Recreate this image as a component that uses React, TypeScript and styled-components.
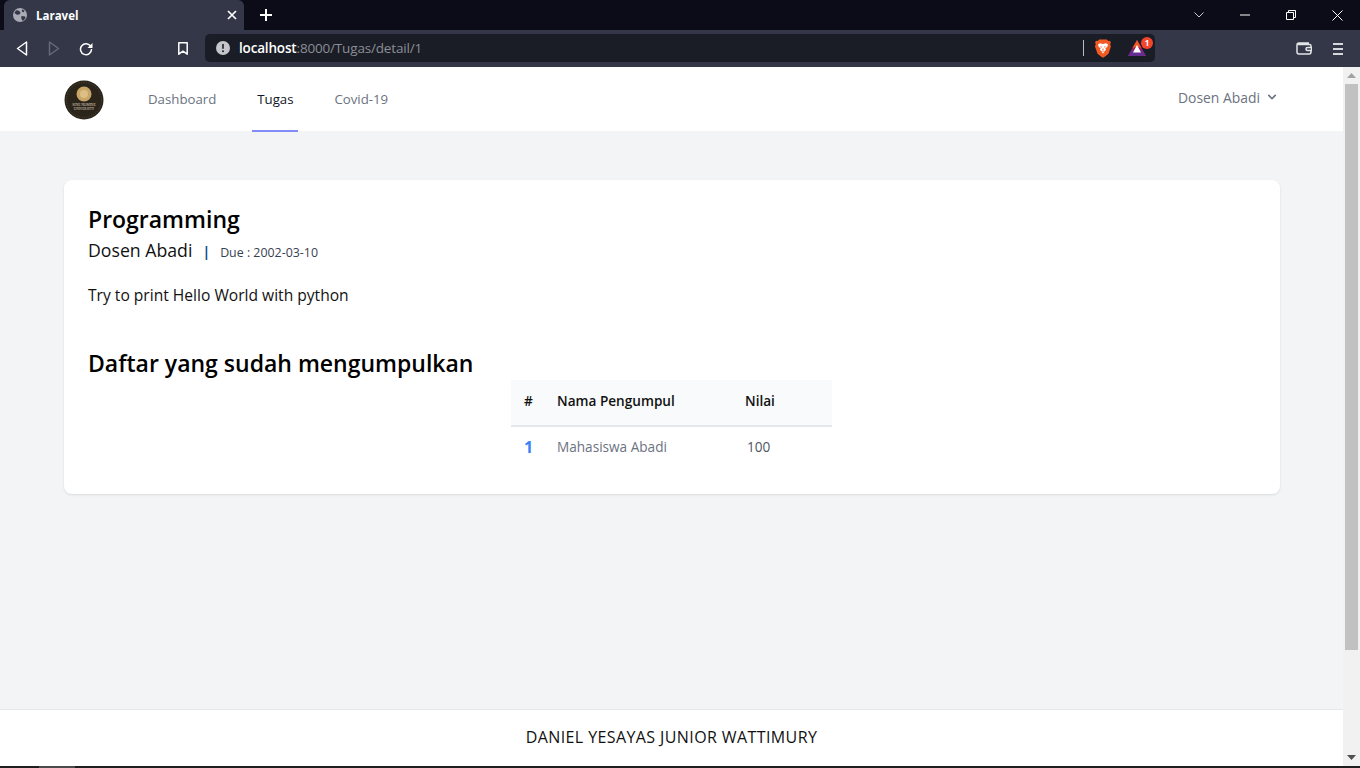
import React from 'react'
import styled, { createGlobalStyle } from 'styled-components'

const GlobalStyle = createGlobalStyle`
  html, body {
    margin: 0;
    padding: 0;
    height: 100%;
    overflow: hidden;
    background: #fff;
  }
  * { box-sizing: border-box; }
`

const PAGE_FONT = `'Open Sans', 'Noto Sans', sans-serif`
const CHROME_FONT = `'Open Sans', 'Noto Sans', sans-serif`

const Screen = styled.div`
  width: 1360px;
  height: 768px;
  display: flex;
  flex-direction: column;
  overflow: hidden;
`

/* browser chrome */
const TabStrip = styled.div`
  height: 30px;
  flex: none;
  display: flex;
  align-items: stretch;
  padding-left: 4px;
  background: #0b0c17;
`
const Tab = styled.div`
  width: 240px;
  display: flex;
  align-items: center;
  padding: 0 5px 0 9px;
  background: #333747;
  border-radius: 6px 6px 0 0;
  font: 700 11.5px ${CHROME_FONT};
  color: #fff;
`
const TabTitle = styled.span`
  flex: 1;
  margin-left: 9px;
`
const TabClose = styled.svg`
  margin-right: 2px;
`
const NewTab = styled.div`
  width: 30px;
  margin-left: 7px;
  display: flex;
  align-items: center;
  justify-content: center;
`
const StripSpacer = styled.div`
  flex: 1;
`
const WindowButton = styled.div`
  width: 46px;
  display: flex;
  align-items: center;
  justify-content: center;
`
const Toolbar = styled.div`
  height: 37px;
  flex: none;
  display: flex;
  align-items: center;
  padding: 0 6px;
  background: #333747;
`
const ToolButton = styled.div<{ $gap?: number; $color?: string }>`
  width: 32px;
  height: 32px;
  flex: none;
  margin-left: ${p => p.$gap || 0}px;
  display: flex;
  align-items: center;
  justify-content: center;
  color: ${p => p.$color || '#fff'};
`
const AddressBar = styled.div`
  width: 950px;
  height: 28px;
  flex: none;
  margin-top: -1px;
  margin-left: 6px;
  padding: 0 8px 0 11px;
  display: flex;
  align-items: center;
  background: #1a1d25;
  border-radius: 5px;
`
const Url = styled.div`
  flex: 1;
  margin-left: 9px;
  padding-bottom: 1px;
  font: 400 13.5px ${CHROME_FONT};
  color: #8b8e96;
  letter-spacing: -0.17px;
`
const UrlHost = styled.span`
  color: #fff;
  font-weight: 600;
`
const AddressDivider = styled.div`
  width: 1px;
  height: 16px;
  background: #b9bbc0;
  margin-right: 11px;
`
const BatWrap = styled.div`
  position: relative;
  width: 18px;
  height: 16px;
  margin-left: 17px;
  margin-right: 1px;
`
const BatBadge = styled.span`
  position: absolute;
  top: -3px;
  left: 13px;
  width: 12px;
  height: 12px;
  border-radius: 50%;
  background: #f1452d;
  color: #fff;
  font: 700 8px/12px ${CHROME_FONT};
  text-align: center;
`

/* viewport */
const Viewport = styled.div`
  flex: 1;
  min-height: 0;
  display: flex;
`
const Page = styled.div`
  flex: 1;
  display: flex;
  flex-direction: column;
  background: #f3f4f6;
  font-family: ${PAGE_FONT};
`
const Scrollbar = styled.div`
  width: 17px;
  flex: none;
  display: flex;
  flex-direction: column;
  align-items: center;
  background: #f1f1f1;
`
const ScrollArrow = styled.div`
  width: 17px;
  height: 17px;
  flex: none;
  display: flex;
  align-items: center;
  justify-content: center;
`
const ScrollThumb = styled.div`
  width: 13px;
  height: 566px;
  flex: none;
  margin-bottom: auto;
  background: #c1c1c1;
`
const Taskbar = styled.div`
  height: 2px;
  flex: none;
  padding-left: 39px;
  background: #1f1f1f;
`
const TaskbarItem = styled.div`
  width: 36px;
  height: 2px;
  background: #4b4b4b;
`

/* app nav */
const Nav = styled.nav`
  height: 65px;
  flex: none;
  display: flex;
  align-items: stretch;
  padding: 0 63px 0 64px;
  background: #fff;
  border-bottom: 1px solid #f3f4f6;
`
const LogoBox = styled.div`
  width: 40px;
  display: flex;
  align-items: center;
  padding-top: 1px;
  margin-right: 40px;
`
const NavLinks = styled.div`
  display: flex;
  gap: 32px;
`
const NavLink = styled.a<{ $active?: boolean }>`
  height: 65px;
  min-width: 46px;
  padding: 1px 4px 0;
  display: flex;
  align-items: center;
  justify-content: center;
  font-size: 13.25px;
  font-weight: 400;
  color: ${p => (p.$active ? '#111827' : '#6b7280')};
  border-bottom: 2px solid ${p => (p.$active ? '#818cf8' : 'transparent')};
`
const UserMenu = styled.div`
  margin-left: auto;
  display: flex;
  align-items: center;
  gap: 4px;
  padding-bottom: 4px;
  font-size: 13.9px;
  color: #6b7280;
`

/* content */
const Main = styled.main`
  flex: 1;
  padding: 48px 63px 0 64px;
`
const Card = styled.section`
  height: 314px;
  padding: 24px 25px 24px 24px;
  background: #fff;
  border-radius: 8px;
  box-shadow: 0 1px 3px rgba(0, 0, 0, 0.07), 0 1px 2px rgba(0, 0, 0, 0.04);
  color: #000;
`
const Title = styled.h1`
  margin: 0;
  padding-bottom: 1px;
  font-size: 23px;
  line-height: 31px;
  font-weight: 600;
`
const MetaRow = styled.div`
  height: 28px;
  display: flex;
  align-items: baseline;
`
const Author = styled.span`
  font-size: 17.7px;
  line-height: 28px;
  color: #111;
`
const Pipe = styled.span`
  margin: 0 10px 0 10px;
  font-size: 14px;
  font-weight: 700;
  color: #0f4c8a;
`
const Due = styled.span`
  font-size: 12.4px;
  color: #374151;
`
const Description = styled.p`
  margin: 20px 0 0;
  padding-bottom: 1px;
  font-size: 15.6px;
  line-height: 23px;
  color: #111;
`
const SectionTitle = styled.h2`
  margin: 40px 0 0;
  padding-bottom: 1px;
  font-size: 23px;
  line-height: 31px;
  font-weight: 600;
`
const Table = styled.table`
  width: 321px;
  margin: 0 auto;
  border-collapse: collapse;
  table-layout: fixed;
  font-size: 13.6px;
`
const HeadCell = styled.th<{ $width: number }>`
  width: ${p => p.$width}px;
  height: 46px;
  padding: 0 0 4px 13px;
  text-align: left;
  font-weight: 600;
  color: #111;
  background: #f9fafb;
  border-bottom: 2px solid #e5e7eb;
`
const BodyCell = styled.td`
  height: 44px;
  padding: 0 0 4px 13px;
  color: #6b7280;
`
const IndexCell = styled(BodyCell)`
  font-size: 16px;
  font-weight: 700;
  color: #3b82f6;
`
const ScoreCell = styled(BodyCell)`
  padding-left: 15px;
  color: #4b5563;
`

const Footer = styled.footer`
  height: 57px;
  flex: none;
  display: flex;
  align-items: center;
  justify-content: center;
  padding-bottom: 2px;
  background: #fff;
  border-top: 1px solid #e5e7eb;
  font-size: 16px;
  letter-spacing: 0.4px;
  color: #111;
`

const stroke = { fill: 'none', stroke: 'currentColor', strokeWidth: 1.5 }

const Logo = () => (
  <svg width="40" height="40" viewBox="0 0 40 40">
    <circle cx="20" cy="20" r="19.5" fill="#2a241b" />
    <circle cx="20" cy="20" r="17.5" fill="none" stroke="#6b6048" strokeWidth="0.6" strokeDasharray="1 1.4" />
    <circle cx="20" cy="14" r="7.5" fill="#c8a566" />
    <circle cx="20" cy="14" r="4" fill="#dcbf85" />
    <text x="20" y="26" textAnchor="middle" fontSize="3.6" fontFamily="Liberation Serif, serif" fill="#e0d8c4">SINE NOMINE</text>
    <text x="20" y="30" textAnchor="middle" fontSize="3.4" fontFamily="Liberation Serif, serif" fill="#e0d8c4">UNIVERSITY</text>
  </svg>
)

const Globe = () => (
  <svg width="14" height="14" viewBox="0 0 14 14">
    <circle cx="7" cy="7" r="7" fill="#a9acb5" />
    <path d="M3 2.2l3 .6 1.6 2-1.2 1.8-2.4.2L1.4 5zM8.6 8l3.4.4.6 1.6-2.4 2.8-1.2-.6-.8-2.6zM9 1.2l2.6 1.6-.8 1.4-2-.6z" fill="#333747" />
  </svg>
)

const BraveLion = () => (
  <svg width="16" height="19" viewBox="0 0 16 19">
    <path d="M4.2 0.5h7.6l1.4 1.6 1.6-.3 1 1.4-.6 2 .7 2.4-2.4 7.2-3.8 3-1.7.9-1.7-.9-3.800-3L0 7.600l.7-2.400-.6-2 1-1.400 1.600.3z" fill="#f15a22" />
    <path d="M5 4.200l3 .8 3-.8 2 1.300-.6 2.200-2 1.600.6 1.600-1.400 1.200H6.400L5 10.900l.6-1.600-2-1.600L3 5.500z" fill="#fff" />
    <path d="M6.200 12.600h3.600L8 14.400z" fill="#fff" />
    <path d="M5 7l2 .8-.6 1zM11 7l-2 .8.6 1zM7.600 9.500h.8l.2 2h-1.200z" fill="#f15a22" />
  </svg>
)

const BatTriangle = () => (
  <svg width="18" height="16" viewBox="0 0 18 16">
    <path d="M9 0l9 16H0z" fill="#9e1f63" />
    <path d="M9 0l4.500 8-4.500-1.500L4.500 8z" fill="#f15a22" />
    <path d="M0 16l3.500-5.800 11 0L18 16z" fill="#662d91" />
    <path d="M9 5l4 7.500H5z" fill="#fff" />
  </svg>
)

const App: React.FC = () => {
  return (
    <Screen>
      <GlobalStyle />
      <TabStrip>
        <Tab>
          <Globe />
          <TabTitle>Laravel</TabTitle>
          <TabClose width="10" height="10" viewBox="0 0 10 10">
            <path d="M1 1l8 8M9 1l-8 8" stroke="#fff" strokeWidth="1.700" />
          </TabClose>
        </Tab>
        <NewTab>
          <svg width="12" height="12" viewBox="0 0 12 12">
            <path d="M6 0v12M0 6h12" stroke="#fff" strokeWidth="2" />
          </svg>
        </NewTab>
        <StripSpacer />
        <WindowButton>
          <svg width="10" height="6" viewBox="0 0 10 6">
            <path d="M.5.5L5 5 9.500.5" fill="none" stroke="#c9cad0" strokeWidth="1" />
          </svg>
        </WindowButton>
        <WindowButton>
          <svg width="10" height="2" viewBox="0 0 10 2">
            <path d="M0 1h10" stroke="#fff" strokeWidth="1" />
          </svg>
        </WindowButton>
        <WindowButton>
          <svg width="10" height="10" viewBox="0 0 10 10">
            <path d="M.5 2.500h7v7h-7zM2.500 2.500V.5h7v7h-2" fill="none" stroke="#fff" strokeWidth="1" />
          </svg>
        </WindowButton>
        <WindowButton>
          <svg width="11" height="11" viewBox="0 0 11 11">
            <path d="M.5.5l10 10M10.500.5l-10 10" stroke="#fff" strokeWidth="1" />
          </svg>
        </WindowButton>
      </TabStrip>

      <Toolbar>
        <ToolButton>
          <svg width="12" height="15" viewBox="0 0 12 15"><path d="M10.500 1v13L1.500 7.500z" {...stroke} strokeLinejoin="round" /></svg>
        </ToolButton>
        <ToolButton $color="#666a78">
          <svg width="12" height="15" viewBox="0 0 12 15"><path d="M1.500 1v13l9-6.500z" {...stroke} strokeLinejoin="round" /></svg>
        </ToolButton>
        <ToolButton>
          <svg width="14" height="14" viewBox="0 0 14 14">
            <path d="M11.800 4.500A5.500 5.500 0 1 0 12.500 7" {...stroke} />
            <path d="M13.500 1v5h-5z" fill="currentColor" />
          </svg>
        </ToolButton>
        <ToolButton $gap={65}>
          <svg width="10" height="13" viewBox="0 0 10 13"><path d="M.8.8h8.400v11.400L5 9.200.8 12.200z" {...stroke} strokeLinejoin="round" /></svg>
        </ToolButton>
        <AddressBar>
          <svg width="14" height="14" viewBox="0 0 14 14">
            <circle cx="7" cy="7" r="7" fill="#c4c6cb" />
            <path d="M7 3v4.800" stroke="#1a1d25" strokeWidth="1.600" />
            <circle cx="7" cy="10.200" r="1" fill="#1a1d25" />
          </svg>
          <Url><UrlHost>localhost</UrlHost>:8000/Tugas/detail/1</Url>
          <AddressDivider />
          <BraveLion />
          <BatWrap>
            <BatTriangle />
            <BatBadge>1</BatBadge>
          </BatWrap>
        </AddressBar>
        <ToolButton $gap={133} $color="#e4e5e8">
          <svg width="16" height="13" viewBox="0 0 16 13">
            <path d="M13 1H3a2 2 0 0 0-2 2v7a2 2 0 0 0 2 2h10a2 2 0 0 0 2-2V9M15 5V4a1.500 1.500 0 0 0-1.500-1.500H2" {...stroke} />
            <path d="M15.500 5.500h-4a1.500 1.500 0 0 0 0 3h4z" {...stroke} />
          </svg>
        </ToolButton>
        <ToolButton $gap={2} $color="#d6d7db">
          <svg width="10" height="12" viewBox="0 0 10 12"><path d="M0 1h10M0 6h10M0 11h10" stroke="currentColor" strokeWidth="2" /></svg>
        </ToolButton>
      </Toolbar>

      <Viewport>
        <Page>
          <Nav>
            <LogoBox><Logo /></LogoBox>
            <NavLinks>
              <NavLink>Dashboard</NavLink>
              <NavLink $active>Tugas</NavLink>
              <NavLink>Covid-19</NavLink>
            </NavLinks>
            <UserMenu>
              Dosen Abadi
              <svg width="16" height="16" viewBox="0 0 20 20" fill="#6b7280">
                <path d="M5.300 7.300a1 1 0 0 1 1.400 0L10 10.600l3.300-3.300a1 1 0 1 1 1.400 1.400l-4 4a1 1 0 0 1-1.400 0l-4-4a1 1 0 0 1 0-1.400z" />
              </svg>
            </UserMenu>
          </Nav>
          <Main>
            <Card>
              <Title>Programming</Title>
              <MetaRow>
                <Author>Dosen Abadi</Author>
                <Pipe>|</Pipe>
                <Due>Due : 2002-03-10</Due>
              </MetaRow>
              <Description>Try to print Hello World with python</Description>
              <SectionTitle>Daftar yang sudah mengumpulkan</SectionTitle>
              <Table>
                <thead>
                  <tr>
                    <HeadCell $width={33}>#</HeadCell>
                    <HeadCell $width={188}>Nama Pengumpul</HeadCell>
                    <HeadCell $width={100}>Nilai</HeadCell>
                  </tr>
                </thead>
                <tbody>
                  <tr>
                    <IndexCell>1</IndexCell>
                    <BodyCell>Mahasiswa Abadi</BodyCell>
                    <ScoreCell>100</ScoreCell>
                  </tr>
                </tbody>
              </Table>
            </Card>
          </Main>
          <Footer>DANIEL YESAYAS JUNIOR WATTIMURY</Footer>
        </Page>
        <Scrollbar>
          <ScrollArrow>
            <svg width="9" height="5" viewBox="0 0 9 5"><path d="M4.500 0L9 5H0z" fill="#a3a3a3" /></svg>
          </ScrollArrow>
          <ScrollThumb />
          <ScrollArrow>
            <svg width="9" height="5" viewBox="0 0 9 5"><path d="M0 0h9L4.500 5z" fill="#505050" /></svg>
          </ScrollArrow>
        </Scrollbar>
      </Viewport>
      <Taskbar><TaskbarItem /></Taskbar>
    </Screen>
  )
}

export default App
